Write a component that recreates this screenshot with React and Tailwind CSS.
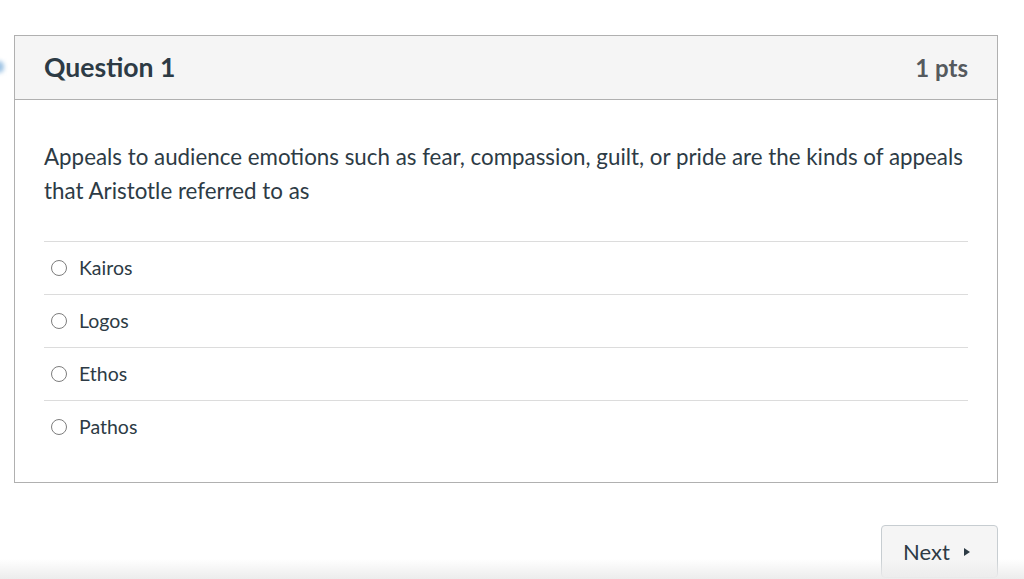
import React, { useState } from 'react';

const answers = ['Kairos', 'Logos', 'Ethos', 'Pathos'];

export default function App() {
  const [picked, setPicked] = useState(null);

  return (
    <div
      className="relative w-[1024px] h-[579px] overflow-hidden bg-white text-[#2d3b45]"
      style={{ fontFamily: 'Lato, "Noto Sans", sans-serif' }}
    >
      {/* faint blue marker at the left edge */}
      <div className="absolute left-[-6px] top-[61px] w-[10px] h-[12px] rounded-full bg-[#9fc4e4] blur-[2px]" />

      <div className="pt-[35px] pl-[14px] pr-[26px]">
        <div className="border border-[#b0b0b0]">
          <div className="h-[64px] flex items-center justify-between px-[29px] bg-[#f5f5f5] border-b border-[#b0b0b0]">
            <h2 className="text-[26.6px] font-bold leading-none">Question 1</h2>
            <span className="text-[24px] font-bold leading-none text-[#555a5e]">1 pts</span>
          </div>

          <div className="px-[29px] pt-[40px] pb-[29px]">
            <p className="text-[22.35px] leading-[34px]">
              Appeals to audience emotions such as fear, compassion, guilt, or pride are the kinds of appeals that Aristotle referred to as
            </p>

            <div className="mt-[33px]">
              {answers.map((a, i) => (
                <label
                  key={a}
                  className="h-[53px] flex items-center gap-[12px] pl-[7px] border-t border-[#dcdcdc] cursor-pointer"
                >
                  <input
                    type="radio"
                    name="q1"
                    checked={picked === i}
                    onChange={() => setPicked(i)}
                    className="appearance-none w-[16px] h-[16px] rounded-full border border-[#7d7d7d] bg-white checked:border-[5px] checked:border-[#0374b5]"
                  />
                  <span className="text-[19.5px]">{a}</span>
                </label>
              ))}
            </div>
          </div>
        </div>

        <div className="flex justify-end mt-[42px]">
          <button className="w-[117px] h-[53px] flex items-center pl-[21px] gap-[13px] bg-[#f5f5f5] border border-[#c7cdd1] rounded-[4px] text-[22px] text-[#2d3b45]">
            Next
            <svg width="8" height="10" viewBox="0 0 8 10">
              <path d="M1 1l6 4-6 4z" fill="#2d3b45" />
            </svg>
          </button>
        </div>
      </div>

      <div className="absolute left-0 right-0 bottom-0 h-[20px] bg-gradient-to-b from-white/0 to-[#ececec] pointer-events-none" />
    </div>
  );
}
